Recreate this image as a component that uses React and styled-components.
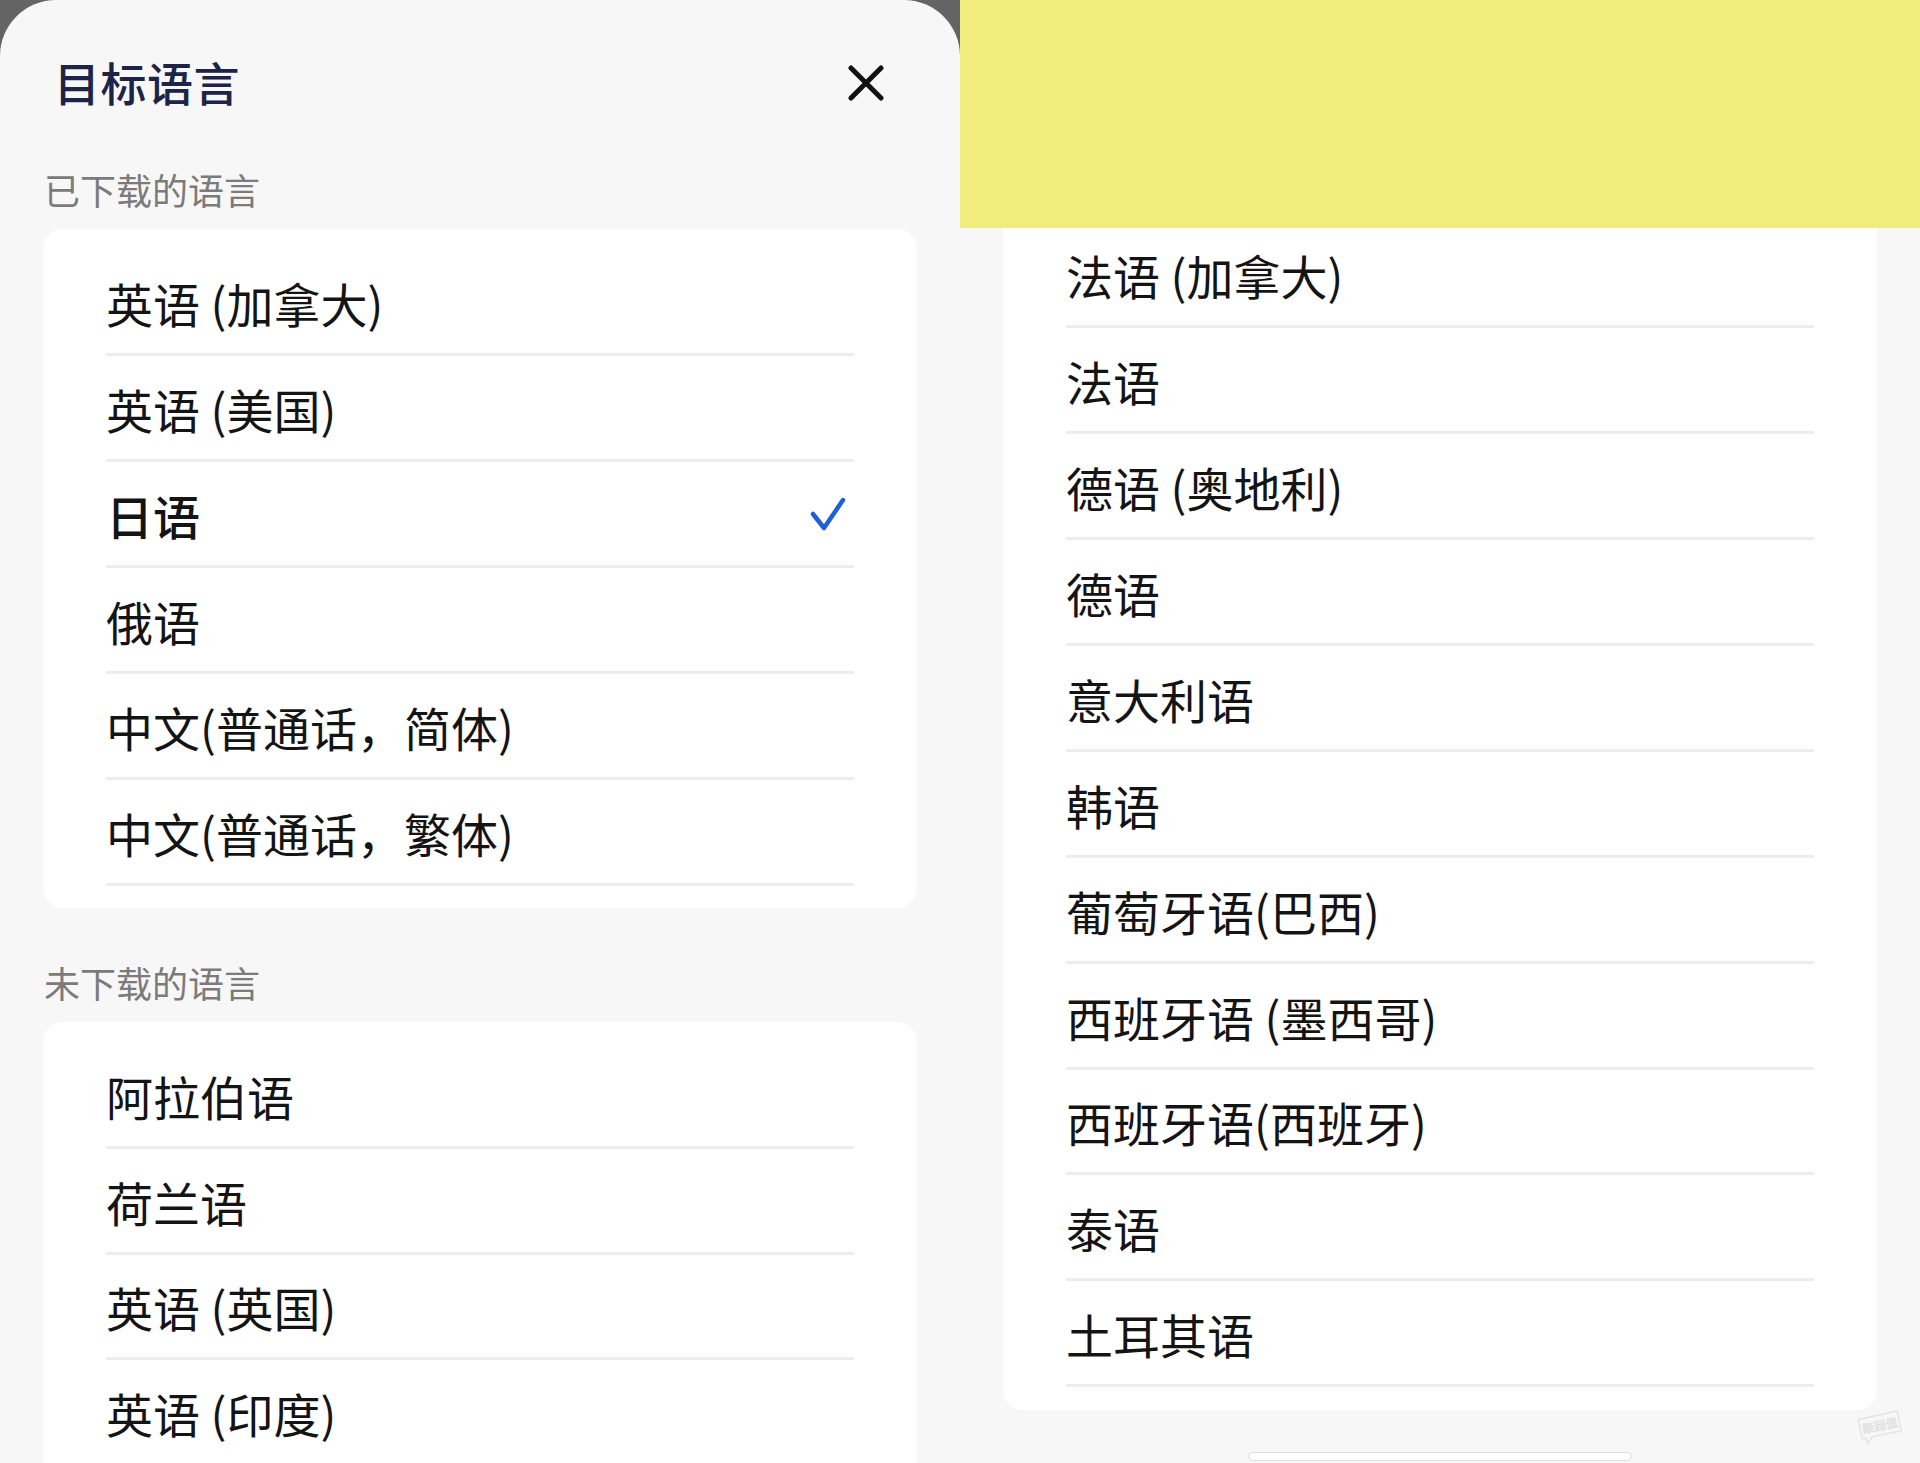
import React from 'react'
import styled, { createGlobalStyle } from 'styled-components'

const GlobalStyle = createGlobalStyle`
  html, body {
    margin: 0;
    padding: 0;
    background: #646464;
  }
  body {
    font-family: "Noto Sans CJK SC", "Noto Sans", sans-serif;
  }
`

const Page = styled.div`
  position: relative;
  display: grid;
  grid-template-columns: 960px 960px;
  width: 1920px;
  height: 1463px;
  overflow: hidden;
`

const Sheet = styled.div`
  display: flex;
  flex-direction: column;
  background: #f7f7f7;
  border-radius: 56px 56px 0 0;
  overflow: hidden;
`

const Header = styled.div`
  display: flex;
  align-items: center;
  justify-content: space-between;
  height: 166px;
  padding: 0 76px 0 54px;
  flex-shrink: 0;
`

const Title = styled.h1`
  margin: 0 0 5px;
  font-size: 46px;
  font-weight: 500;
  line-height: 1;
  color: #1e2448;
  letter-spacing: 0.5px;
`

const CloseButton = styled.button`
  display: flex;
  padding: 0;
  border: none;
  background: none;
  cursor: pointer;
`

const SectionLabel = styled.div`
  flex-shrink: 0;
  height: 46px;
  line-height: 46px;
  margin: ${(p) => p.$top || 0}px 0 ${(p) => p.$bottom || 0}px;
  padding-left: 44px;
  font-size: 36px;
  color: #7b7b7b;
`

const Card = styled.div`
  flex-shrink: 0;
  margin: 0 43px;
  padding: 21px 0 22px;
  background: #fff;
  border-radius: 20px;
`

const Row = styled.div`
  display: flex;
  align-items: center;
  justify-content: space-between;
  box-sizing: border-box;
  height: 105.95px;
  margin: 0 63px;
  padding: 2px 7px 0 0;
  border-bottom: 3px solid #ececec;
  font-size: 47px;
  font-weight: ${(p) => (p.$selected ? 500 : 400)};
  color: #141414;
  white-space: nowrap;
`

const RightColumn = styled.div`
  display: flex;
  flex-direction: column;
  background: #f7f7f7;
`

const Banner = styled.div`
  position: relative;
  z-index: 1;
  flex-shrink: 0;
  height: 228px;
  background: #f2ec7c;
`

const ContinuedCard = styled(Card)`
  margin-top: -6px;
  padding: 0 0 23px;
  border-radius: 0 0 20px 20px;
`

const HomeBar = styled.div`
  flex-shrink: 0;
  box-sizing: border-box;
  width: 384px;
  height: 9px;
  margin: 42px auto 0;
  background: #fff;
  border: 1.5px solid #dedede;
  border-radius: 5px;
`

const Watermark = styled.div`
  position: absolute;
  right: 14px;
  bottom: 12px;
  opacity: 0.9;
`

const downloaded = [
  '英语 (加拿大)',
  '英语 (美国)',
  '日语',
  '俄语',
  '中文(普通话，简体)',
  '中文(普通话，繁体)',
]

const notDownloaded = ['阿拉伯语', '荷兰语', '英语 (英国)', '英语 (印度)']

const moreLanguages = [
  '法语 (加拿大)',
  '法语',
  '德语 (奥地利)',
  '德语',
  '意大利语',
  '韩语',
  '葡萄牙语(巴西)',
  '西班牙语 (墨西哥)',
  '西班牙语(西班牙)',
  '泰语',
  '土耳其语',
]

function CloseIcon() {
  return (
    <svg width="36" height="36" viewBox="0 0 36 36">
      <path d="M3 3 L33 33 M33 3 L3 33" stroke="#111" strokeWidth="5" strokeLinecap="round" />
    </svg>
  )
}

function CheckIcon() {
  return (
    <svg width="40" height="40" viewBox="0 0 40 40">
      <path
        d="M6 20 L17 34 L36 6"
        fill="none"
        stroke="#1f5fd8"
        strokeWidth="4.5"
        strokeLinecap="round"
        strokeLinejoin="round"
      />
    </svg>
  )
}

function LanguageRow({ name, selected }) {
  return (
    <Row $selected={selected}>
      <span>{name}</span>
      {selected && <CheckIcon />}
    </Row>
  )
}

export default function App() {
  const current = '日语'
  return (
    <>
      <GlobalStyle />
      <Page>
        <Sheet>
          <Header>
            <Title>目标语言</Title>
            <CloseButton aria-label="关闭">
              <CloseIcon />
            </CloseButton>
          </Header>

          <SectionLabel $bottom={17}>已下载的语言</SectionLabel>
          <Card>
            {downloaded.map((name) => (
              <LanguageRow key={name} name={name} selected={name === current} />
            ))}
          </Card>

          <SectionLabel $top={51} $bottom={17}>未下载的语言</SectionLabel>
          <Card>
            {notDownloaded.map((name) => (
              <LanguageRow key={name} name={name} />
            ))}
          </Card>
        </Sheet>

        <RightColumn>
          <Banner />
          <ContinuedCard>
            {moreLanguages.map((name) => (
              <LanguageRow key={name} name={name} />
            ))}
          </ContinuedCard>
          <HomeBar />
        </RightColumn>

        <Watermark>
          <svg width="52" height="40" viewBox="0 0 52 40">
            <g transform="rotate(-12 26 20)">
              <path
                d="M6 9 H46 V29 H16 L10 35 V29 H6 Z"
                fill="none"
                stroke="#e2e2e2"
                strokeWidth="1.5"
                strokeLinejoin="round"
              />
              <text
                x="26"
                y="24"
                textAnchor="middle"
                fontSize="12"
                fill="none"
                stroke="#dedede"
                strokeWidth="0.6"
                fontFamily="Noto Sans CJK SC, sans-serif"
              >
                聚超值
              </text>
            </g>
          </svg>
        </Watermark>
      </Page>
    </>
  )
}
